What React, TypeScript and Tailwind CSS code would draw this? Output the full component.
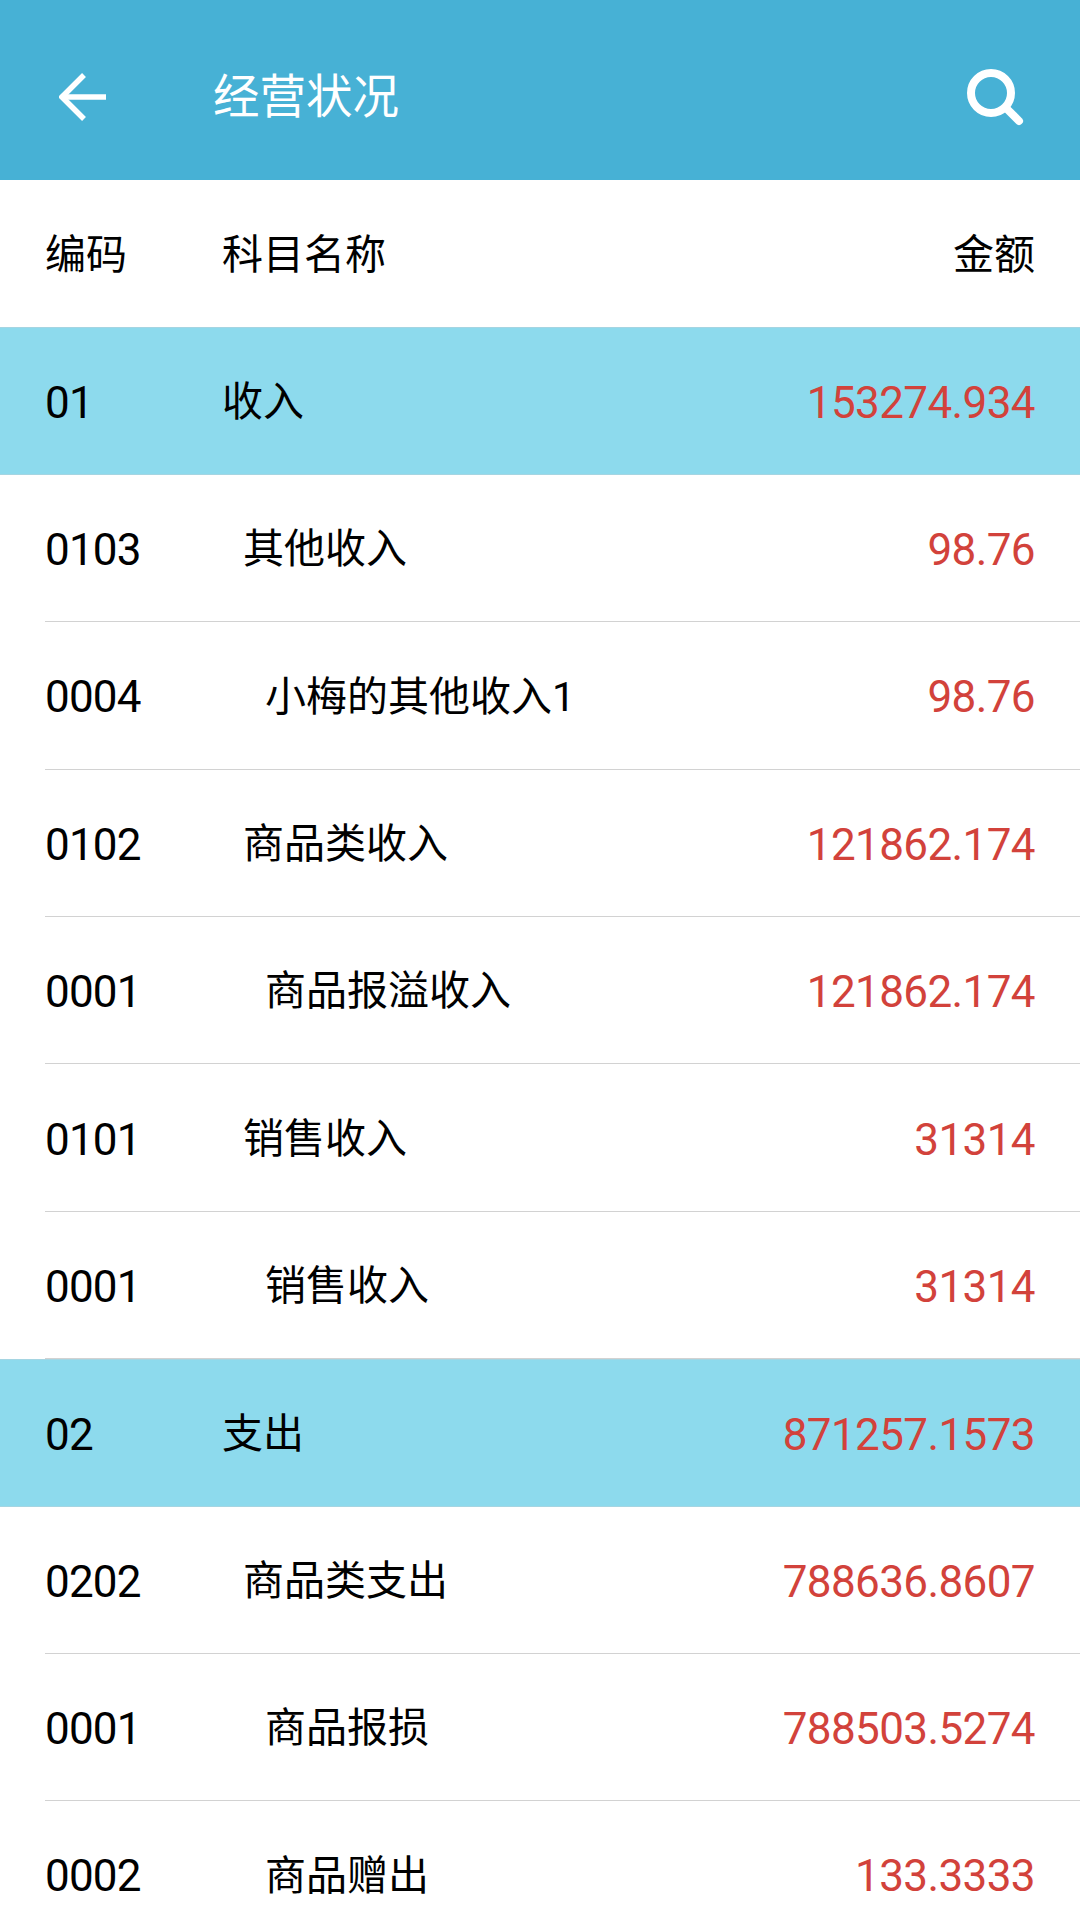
const rows = [
  { code: '01', name: '收入', amount: '153274.934', level: 0 },
  { code: '0103', name: '其他收入', amount: '98.76', level: 1 },
  { code: '0004', name: '小梅的其他收入1', amount: '98.76', level: 2 },
  { code: '0102', name: '商品类收入', amount: '121862.174', level: 1 },
  { code: '0001', name: '商品报溢收入', amount: '121862.174', level: 2 },
  { code: '0101', name: '销售收入', amount: '31314', level: 1 },
  { code: '0001', name: '销售收入', amount: '31314', level: 2 },
  { code: '02', name: '支出', amount: '871257.1573', level: 0 },
  { code: '0202', name: '商品类支出', amount: '788636.8607', level: 1 },
  { code: '0001', name: '商品报损', amount: '788503.5274', level: 2 },
  { code: '0002', name: '商品赠出', amount: '133.3333', level: 2 },
];

const font = "font-['Roboto','Noto_Sans_CJK_SC',sans-serif]";

function Row({ code, name, amount, level }: { code: string; name: string; amount: string; level: number }) {
  if (level === 0) {
    return (
      <div className="h-[147.4px] flex items-center pt-[4px] pl-[45px] pr-[45px] bg-[#8ddaed] border-y border-[#a5d5e2]">
        <span className="w-[177px] text-black text-[44px] tracking-[-0.8px]">{code}</span>
        <span className="flex-1 text-black">{name}</span>
        <span className="text-[#d2423b] text-[44px] tracking-[-0.6px]">{amount}</span>
      </div>
    );
  }
  return (
    <div className="h-[147.4px] ml-[45px] pt-[4px] pr-[45px] flex items-center border-b border-[#d2d2d2]">
      <span className="w-[177px] text-black text-[44px] tracking-[-0.8px]">{code}</span>
      <span className={level === 1 ? 'flex-1 pl-[21px] text-black' : 'flex-1 pl-[43px] text-black'}>{name}</span>
      <span className="text-[#d2423b] text-[44px] tracking-[-0.6px]">{amount}</span>
    </div>
  );
}

export default function App() {
  return (
    <div className={`w-[1080px] h-[1920px] overflow-hidden bg-white text-[41px] ${font}`}>
      {/* Top bar */}
      <div className="h-[180px] pt-[14px] bg-[#47b1d5] flex items-center text-white">
        <div className="w-[213px] pl-[59px] flex items-center">
          <svg width="50" height="50" viewBox="0 0 50 50" fill="none" stroke="white" strokeWidth="5.5">
            <path d="M47 25H4" />
            <path d="M25 3L3 25L25 47" />
          </svg>
        </div>
        <span className="flex-1 text-[46.5px] leading-none">经营状况</span>
        <div className="pr-[56px]">
          <svg width="58" height="58" viewBox="0 0 58 58" fill="none" stroke="white" strokeLinecap="round">
            <circle cx="25" cy="25" r="20" strokeWidth="8" />
            <path d="M40 40L53 53" strokeWidth="8" />
          </svg>
        </div>
      </div>

      {/* Column titles */}
      <div className="h-[147.4px] pt-[4px] flex items-center px-[45px] text-black">
        <span className="w-[177px]">编码</span>
        <span className="flex-1">科目名称</span>
        <span>金额</span>
      </div>

      {rows.map((r, i) => (
        <Row key={i} {...r} />
      ))}
    </div>
  );
}
